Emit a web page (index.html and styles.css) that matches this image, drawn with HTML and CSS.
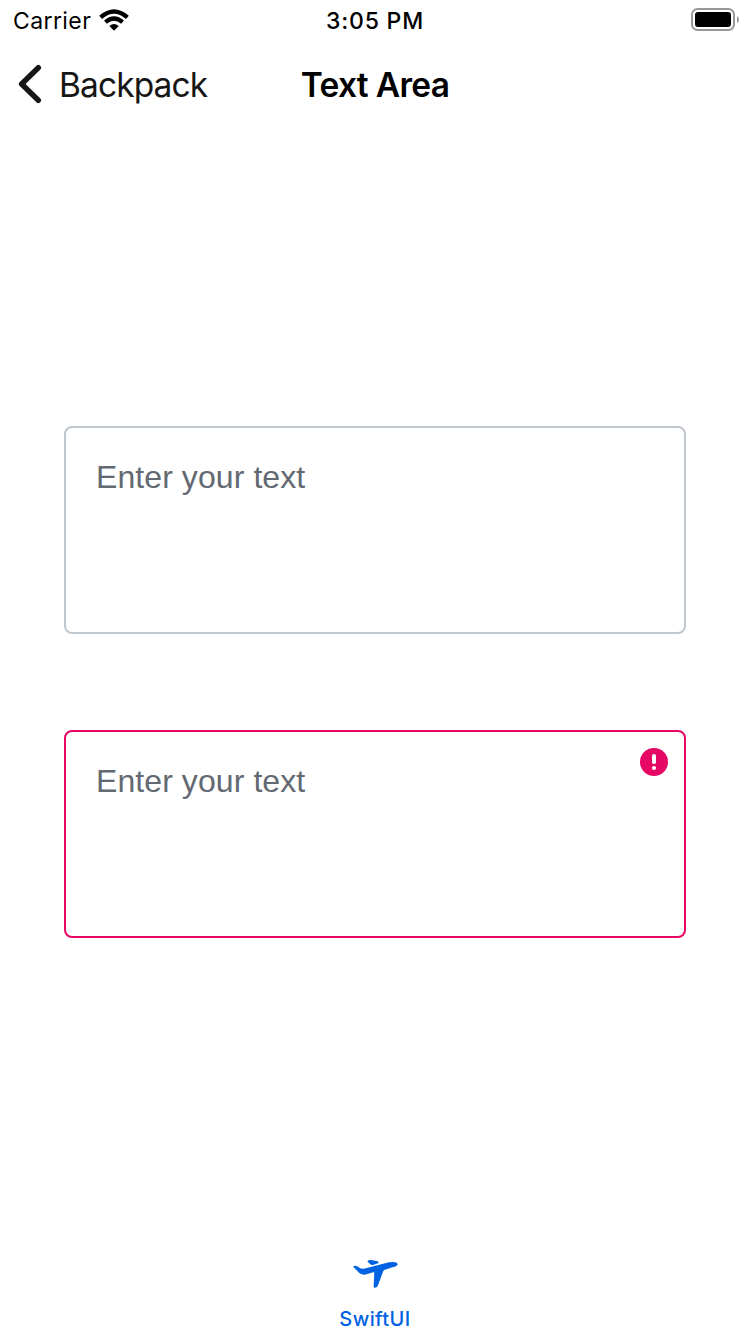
FILE: index.html
```html
<!DOCTYPE html>
<html lang="en">
<head>
<meta charset="utf-8">
<title>Text Area</title>
<link rel="stylesheet" href="styles.css">
</head>
<body>
<div class="screen">
  <header class="status">
    <div class="status-left">
      <span class="carrier">Carrier</span>
      <svg class="wifi" width="30" height="22" viewBox="0 0 30 22">
        <path d="M1.600 8.400Q15-3.400 28.400 8.400" fill="none" stroke="#000" stroke-width="4.300"/>
        <path d="M6.400 13.200Q15 5.800 23.600 13.200" fill="none" stroke="#000" stroke-width="4.200"/>
        <path d="M10.300 17Q15 13.200 19.700 17L15 21.700Z"/>
      </svg>
    </div>
    <span class="time">3:05 PM</span>
    <svg class="battery" width="48" height="24" viewBox="0 0 48 24">
      <rect x="1" y="1" width="42" height="21" rx="5.5" fill="none" stroke="#999" stroke-width="2"/>
      <rect x="4" y="4" width="36" height="15" rx="3"/>
      <path d="M46 8Q48 9 48 11.500Q48 14 46 15Z" fill="#999"/>
    </svg>
  </header>
  <nav class="nav">
    <a class="back">
      <svg width="24" height="40" viewBox="0 0 24 40"><path d="M20.300 3.700L3.600 20L20.300 36.300" fill="none" stroke="#161616" stroke-width="5.400" stroke-linecap="round" stroke-linejoin="round"/></svg>
      <span class="back-label">Backpack</span>
    </a>
    <h1 class="title">Text Area</h1>
  </nav>
  <main class="content">
    <div class="area"><span class="placeholder">Enter your text</span></div>
    <div class="area area-error">
      <span class="placeholder">Enter your text</span>
      <svg class="error-icon" width="28" height="28" viewBox="0 0 28 28">
        <circle cx="14" cy="14" r="14" fill="#e70866"/>
        <rect x="12" y="6" width="4" height="10" rx="1.8" fill="#fff"/>
        <circle cx="14" cy="20" r="2.100" fill="#fff"/>
      </svg>
    </div>
  </main>
  <footer class="tab">
    <svg class="plane" width="46" height="30" viewBox="82 42 138 90" fill="#0062e3">
      <path d="M86 62Q94 61 102 69Q110 73 123 69L190 52Q207 49 214 54Q219 59 211 64L177 74Q174 76 172 80L157 121Q155 129 146 128Q144 128 144 124L146 83Q146 81 142 82L123 88Q110 91 101 84L84 67Q82 64 86 62Z"/>
      <path d="M125 49Q129 44 137 45L156 49Q161 52 157 55L142 60Q137 61 132 56Z"/>
    </svg>
    <span class="tab-label">SwiftUI</span>
  </footer>
</div>
</body>
</html>
```
FILE: styles.css
```css
* { box-sizing: border-box; }
body { margin: 0; background: #fff; font-family: Inter, "Liberation Sans", sans-serif; }
svg { display: block; flex: none; }
.screen { width: 750px; height: 1334px; display: flex; flex-direction: column; overflow: hidden; white-space: nowrap; }
.status { height: 40px; display: grid; grid-template-columns: 1fr auto 1fr; align-items: center; color: #000; padding: 0 11px 0 13px; }
.status-left { display: flex; align-items: center; gap: 8px; }
.carrier { font-size: 23px; letter-spacing: 0.4px; line-height: 38px; padding-top: 2px; }
.time { font-size: 23px; font-weight: 500; letter-spacing: 0.8px; line-height: 38px; padding-top: 2px; margin-left: -2px; }
.battery { justify-self: end; }
.nav { height: 88px; display: grid; grid-template-columns: 1fr auto 1fr; align-items: center; padding: 0 18px; }
.back { display: flex; align-items: center; gap: 17px; color: #161616; }
.back-label { font-size: 33.500px; letter-spacing: -0.900px; line-height: 38px; padding-top: 2px; }
.title { margin: 0; font-size: 33.500px; line-height: 38px; padding-top: 2px; font-weight: 600; letter-spacing: -0.700px; color: #000; }
.content { flex: 1; padding: 298px 64px 0; display: flex; flex-direction: column; gap: 96px; }
.area { height: 208px; border: 2px solid #c1c7cf; border-radius: 8px; padding: 30px 16px 0 30px; display: flex; justify-content: space-between; align-items: flex-start; }
.area-error { border-color: #e70866; }
.placeholder { font-family: "Liberation Sans", Arial, sans-serif; font-size: 32px; line-height: 38px; letter-spacing: 0.080px; color: #626971; }
.error-icon { margin-top: -14px; }
.tab { height: 75px; display: flex; flex-direction: column; align-items: center; color: #0062e3; }
.plane { margin-left: 1px; }
.tab-label { font-size: 20px; line-height: 24px; font-weight: 500; letter-spacing: 0.4px; margin-top: 18px; }
```
